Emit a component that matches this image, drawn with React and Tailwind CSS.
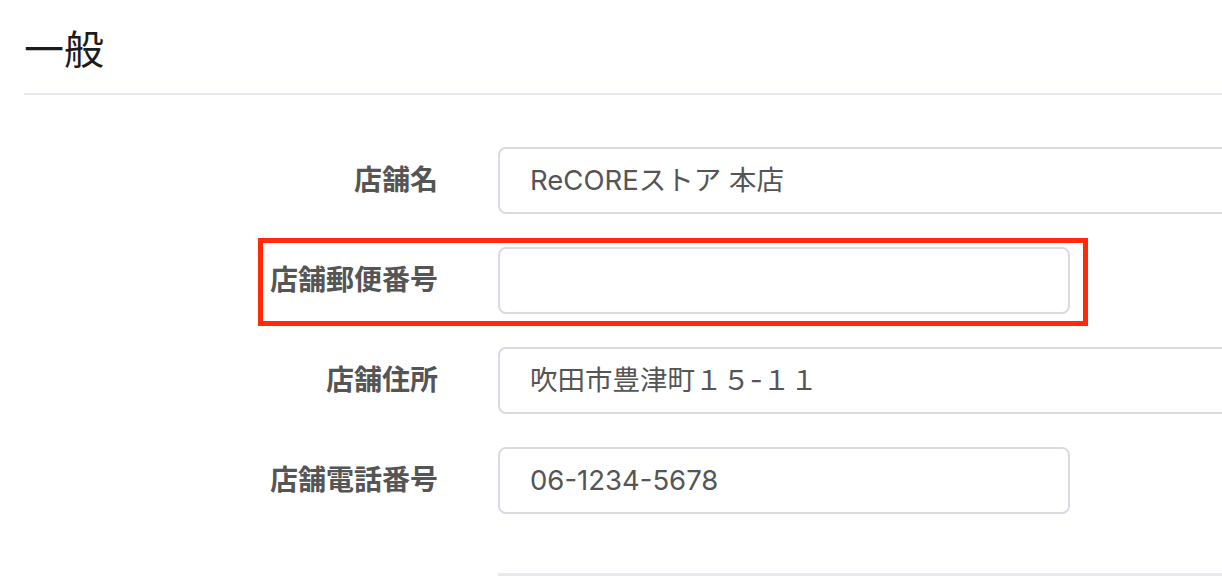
import React from "react";

const font = { fontFamily: '"Liberation Sans", "Noto Sans CJK JP", sans-serif' };
const inputFont = { fontFamily: 'Inter, "Noto Sans CJK JP", sans-serif' };

function Row({ label, value, short, highlight }) {
  return (
    <div className="relative flex h-[67px] items-center">
      <div className="w-[414px] shrink-0 text-right text-[28px] font-bold text-[#555]">{label}</div>
      <div className="ml-[60px] shrink-0">
        <div
          className={`flex h-[67px] items-center rounded-[8px] border-2 border-[#d8dbe4] bg-white pl-[30px] text-[27.5px] text-[#555] ${
            short ? "w-[572px]" : "w-[800px]"
          }`}
          style={inputFont}
        >
          {value}
        </div>
      </div>
      {highlight && (
        <div className="pointer-events-none absolute left-[234px] top-[-9px] h-[88px] w-[830px] border-[5px] border-[#ff2a0a]" />
      )}
    </div>
  );
}

export default function App() {
  return (
    <div className="h-[576px] w-[1222px] overflow-hidden bg-white" style={font}>
      <div className="pl-[24px]">
        <h1 className="pt-[24px] text-[40px] font-normal leading-[52px] text-[#1c1c1c]">一般</h1>
        <div className="mt-[17px] h-[2px] w-[1300px] bg-[#e8e8ee]" />
        <div className="mt-[52px] flex flex-col gap-[33px]">
          <Row label="店舗名" value="ReCOREストア 本店" />
          <Row label="店舗郵便番号" value="" short highlight />
          <Row label="店舗住所" value="吹田市豊津町１５-１１" />
          <Row label="店舗電話番号" value="06-1234-5678" short />
        </div>
        <div className="ml-[474px] mt-[59px] h-[3px] w-[800px] bg-[#e8e8ee]" />
      </div>
    </div>
  );
}
